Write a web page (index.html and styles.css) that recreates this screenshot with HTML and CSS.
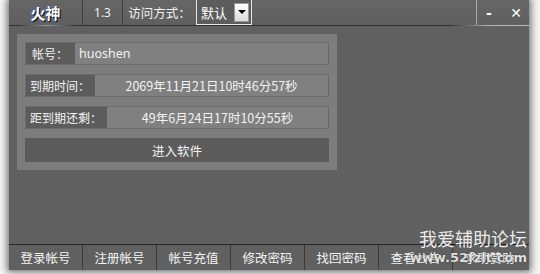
FILE: index.html
```html
<!DOCTYPE html>
<html lang="zh">
<head>
<meta charset="utf-8">
<link rel="stylesheet" href="styles.css">
</head>
<body>
<div class="win">
  <div class="titlebar">
    <div class="t-name">火神</div>
    <div class="t-ver">1.3</div>
    <div class="t-label">访问方式：</div>
    <div class="t-select"><span class="sel-text">默认</span><span class="sel-btn"><span class="tri"></span></span></div>
    <div class="t-fill"></div>
    <div class="t-ctrl"><span class="min">-</span><span class="close">✕</span></div>
  </div>
  <div class="body">
    <div class="panel">
      <div class="row"><div class="lab lab1">帐号：</div><div class="val left">huoshen</div></div>
      <div class="row"><div class="lab">到期时间：</div><div class="val">2069年11月21日10时46分57秒</div></div>
      <div class="row"><div class="lab">距到期还剩：</div><div class="val">49年6月24日17时10分55秒</div></div>
      <div class="btn">进入软件</div>
    </div>
  </div>
  <div class="tabs">
    <div class="tab">登录帐号</div>
    <div class="tab">注册帐号</div>
    <div class="tab">帐号充值</div>
    <div class="tab">修改密码</div>
    <div class="tab">找回密码</div>
    <div class="tab">查看公告</div>
    <div class="tab">求助赞助</div>
  </div>
  <div class="wm">
    <div class="wm1">我爱辅助论坛</div>
    <div class="wm2">www.52fzlt.com</div>
  </div>
</div>
</body>
</html>
```
FILE: styles.css
```css
html, body { margin: 0; padding: 0; background: #f4f4f4; }
body { width: 540px; height: 274px; overflow: hidden; font-family: "Noto Sans CJK SC", "Microsoft YaHei", sans-serif; font-size: 12px; color: #f2f2f2; }
.win { position: relative; margin-left: 9px; width: 520px; height: 270px; background: #606060; box-shadow: 0 0 7px 2px rgba(0,0,0,0.55); display: flex; flex-direction: column; }
.titlebar { height: 25px; display: flex; align-items: stretch; border-bottom: 1px solid #2e2e2e; background: linear-gradient(#666, #5f5f5f); position: relative; }
.titlebar::before { content: ""; position: absolute; left: 8px; width: 60px; bottom: -1px; height: 1px; background: linear-gradient(90deg, #2e2e2e, #8a9ab8, #2e2e2e); }
.titlebar::after { content: ""; position: absolute; left: 440px; right: 0; bottom: -1px; height: 1px; background: linear-gradient(90deg, #2e2e2e, #b8b8b8 40px); }
.t-name { width: 73px; display: flex; align-items: center; justify-content: center; font-size: 15px; font-weight: bold; color: #fff; text-shadow: 1px 1px 0 #000, -1px 0 0 #4a7fc0; border-right: 1px solid #404040; }
.t-ver { width: 39px; display: flex; align-items: center; justify-content: center; font-family: "Noto Sans", sans-serif; font-size: 12px; border-right: 1px solid #404040; }
.t-label { width: 73px; display: flex; align-items: center; justify-content: center; font-size: 12.5px; }
.t-select { width: 54px; border: 1px solid #e8e8e8; border-top: none; display: flex; align-items: center; background: #5c5c5c; }
.sel-text { flex: 1; padding-left: 4px; font-size: 13px; color: #fff; }
.sel-btn { width: 15px; height: 19px; margin-right: 2px; background: linear-gradient(#fff, #dcdcdc); border: 1px solid #999; box-sizing: border-box; display: flex; align-items: center; justify-content: center; }
.tri { width: 0; height: 0; border-left: 4px solid transparent; border-right: 4px solid transparent; border-top: 4px solid #000; }
.t-fill { flex: 1; }
.t-ctrl { width: 50px; border-left: 1px solid #a8a8a8; display: flex; align-items: center; justify-content: space-around; color: #fff; font-weight: bold; padding-left: 2px; }
.min { font-size: 14px; font-family: "DejaVu Sans", sans-serif; }
.close { font-size: 14px; font-family: "DejaVu Sans", sans-serif; margin-left: 4px; }
.body { flex: 1; padding: 8px 0 0 8px; }
.panel { width: 304px; background: #7d7d7d; padding: 8px; display: flex; flex-direction: column; gap: 9px; }
.row { height: 23px; display: flex; background: #808080; border: 1px solid #6a6a6a; box-sizing: border-box; }
.lab { background: #5c5c5c; padding: 0 5px 0 4px; display: flex; align-items: center; font-size: 12px; white-space: nowrap; }
.lab.lab1 { padding: 0 7px 0 6px; }
.val { flex: 1; display: flex; align-items: center; justify-content: center; font-size: 12.5px; }
.val.left { justify-content: flex-start; padding-left: 4px; font-family: "Noto Sans", sans-serif; font-size: 12.5px; }
.btn { height: 24px; background: #5b5b5b; display: flex; align-items: center; justify-content: center; font-size: 12.5px; }
.tabs { height: 25px; display: flex; border-top: 1px solid #262626; }
.tab { width: 73px; display: flex; align-items: center; justify-content: center; font-size: 12.5px; border-right: 1px solid #3e3b30; }
.tab:last-child { border-right: none; }
.wm { position: absolute; right: 2px; bottom: 4px; display: flex; flex-direction: column; align-items: flex-end; color: rgba(255,255,255,0.9); pointer-events: none; }
.wm1 { font-size: 18px; line-height: 24px; }
.wm2 { font-family: "DejaVu Sans", sans-serif; font-weight: bold; font-size: 13px; line-height: 16px; text-shadow: 0 0 1px #000; }
```
